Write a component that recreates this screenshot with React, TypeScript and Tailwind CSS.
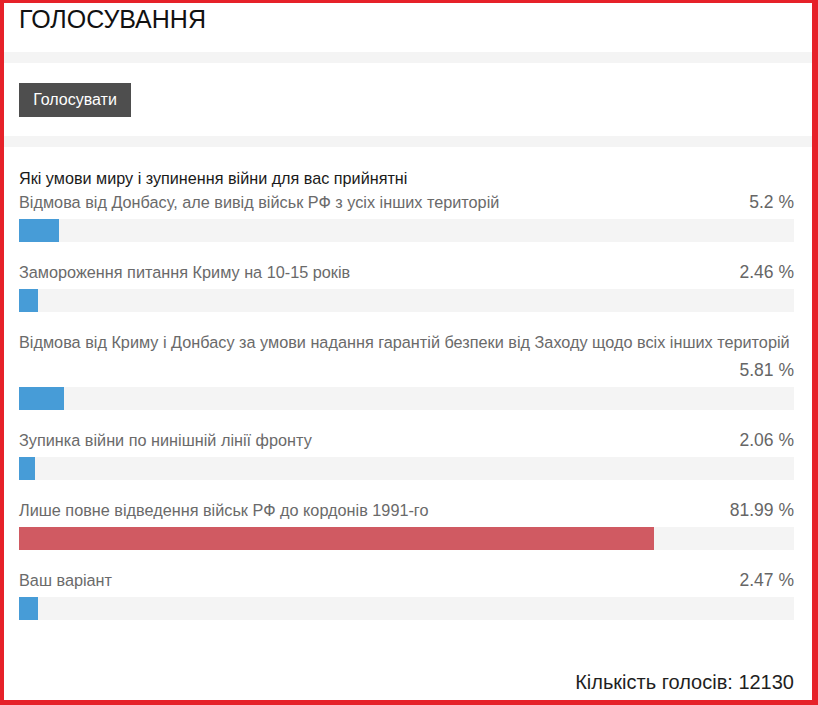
import React from 'react';

type Option = {
  label: string;
  percent: string;
  value: number;
  top?: boolean;
};

const options: Option[] = [
  { label: 'Відмова від Донбасу, але вивід військ РФ з усіх інших територій', percent: '5.2 %', value: 5.2 },
  { label: 'Замороження питання Криму на 10-15 років', percent: '2.46 %', value: 2.46 },
  {
    label: 'Відмова від Криму і Донбасу за умови надання гарантій безпеки від Заходу щодо всіх інших територій',
    percent: '5.81 %',
    value: 5.81,
  },
  { label: 'Зупинка війни по нинішній лінії фронту', percent: '2.06 %', value: 2.06 },
  { label: 'Лише повне відведення військ РФ до кордонів 1991-го', percent: '81.99 %', value: 81.99, top: true },
  { label: 'Ваш варіант', percent: '2.47 %', value: 2.47 },
];

const Separator = () => <div className="h-[11px] bg-[#f4f4f4]" />;

export default function App() {
  return (
    <div className="w-[818px] h-[705px] bg-[#e62129] pt-[3px] pl-[4px] font-['Liberation_Sans',Arial,sans-serif]">
      <div className="w-[808px] h-[697px] bg-white flex flex-col">
        <div className="h-[49px] pl-[15px] pt-[4px]">
          <h1 className="text-[25px] leading-[25px] text-[#111]">ГОЛОСУВАННЯ</h1>
        </div>
        <Separator />
        <div className="h-[73px] pl-[15px] pt-[20px]">
          <button className="w-[112px] h-[34px] bg-[#4e4e4e] text-white text-[16px]">Голосувати</button>
        </div>
        <Separator />
        <div className="pl-[15px] pr-[18px] pt-[21px] flex flex-col flex-1">
          <div className="text-[16.2px] leading-[20px] text-[#1a1a1a]">Які умови миру і зупинення війни для вас прийнятні</div>
          {options.map((o) => (
            <div key={o.label} className="mb-[16px]">
              <div className="flex flex-wrap items-baseline">
                <span className="text-[16.25px] leading-[28px] text-[#6a6a6a]">{o.label}</span>
                <span className="ml-auto text-[17.5px] leading-[28px] text-[#666]">{o.percent}</span>
              </div>
              <div className="mt-[3px] h-[23px] bg-[#f4f4f4]">
                <div
                  className={o.top ? 'h-full bg-[#d05a62]' : 'h-full bg-[#479cd7]'}
                  style={{ width: `${o.value}%` }}
                />
              </div>
            </div>
          ))}
          <div className="mt-auto mb-[6px] text-right text-[20px] leading-[24px] text-[#1f1f1f]">
            Кількість голосів: 12130
          </div>
        </div>
      </div>
    </div>
  );
}
